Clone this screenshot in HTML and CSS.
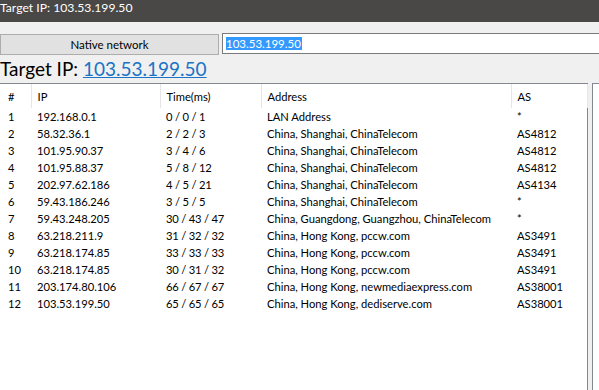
FILE: index.html
```html
<!DOCTYPE html>
<html lang="en">
<head>
  <meta charset="UTF-8" />
  <title>Target IP: 103.53.199.50</title>
  <link rel="stylesheet" href="styles.css">
</head>
<body>

  <!-- Window title -->
  <div class="titlebar">Target IP: 103.53.199.50</div>

  <!-- Toolbar -->
  <div class="toolbar">
    <button class="net-button">Native network</button>
    <div class="ip-input"><span class="selected">103.53.199.50</span></div>
  </div>

  <h1 class="target">Target IP: <a href="#">103.53.199.50</a></h1>

  <!-- Trace results -->
  <div class="panels">
    <div class="list-panel">
      <table class="trace">
        <colgroup>
          <col class="w-no"><col class="w-ip"><col class="w-time"><col class="w-addr"><col class="w-as">
        </colgroup>
        <thead>
          <tr>
            <th>#</th>
            <th>IP</th>
            <th>Time(ms)</th>
            <th>Address</th>
            <th>AS</th>
          </tr>
        </thead>
        <tbody id="traceRows"></tbody>
      </table>
    </div>
    <div class="side-panel"></div>
  </div>

  <script>
    const hops = [
      ['192.168.0.1', '0 / 0 / 1', 'LAN Address', '*'],
      ['58.32.36.1', '2 / 2 / 3', 'China, Shanghai, ChinaTelecom', 'AS4812'],
      ['101.95.90.37', '3 / 4 / 6', 'China, Shanghai, ChinaTelecom', 'AS4812'],
      ['101.95.88.37', '5 / 8 / 12', 'China, Shanghai, ChinaTelecom', 'AS4812'],
      ['202.97.62.186', '4 / 5 / 21', 'China, Shanghai, ChinaTelecom', 'AS4134'],
      ['59.43.186.246', '3 / 5 / 5', 'China, Shanghai, ChinaTelecom', '*'],
      ['59.43.248.205', '30 / 43 / 47', 'China, Guangdong, Guangzhou, ChinaTelecom', '*'],
      ['63.218.211.9', '31 / 32 / 32', 'China, Hong Kong, pccw.com', 'AS3491'],
      ['63.218.174.85', '33 / 33 / 33', 'China, Hong Kong, pccw.com', 'AS3491'],
      ['63.218.174.85', '30 / 31 / 32', 'China, Hong Kong, pccw.com', 'AS3491'],
      ['203.174.80.106', '66 / 67 / 67', 'China, Hong Kong, newmediaexpress.com', 'AS38001'],
      ['103.53.199.50', '65 / 65 / 65', 'China, Hong Kong, dediserve.com', 'AS38001']
    ];

    const tbody = document.getElementById('traceRows');
    tbody.innerHTML = hops.map((h, i) => `
      <tr>
        <td>${i + 1}</td>
        <td>${h[0]}</td>
        <td class="time">${h[1]}</td>
        <td>${h[2]}</td>
        <td>${h[3]}</td>
      </tr>
    `).join('');
  </script>
</body>
</html>
```

FILE: styles.css
```css
:root {
  --window-bg: #f0f0f0;
  --title-bg: #4a4846;
  --border: #828790;
  --link: #1a73c6;
  --select: #3399ff;
}

* {
  box-sizing: border-box;
}

body, html {
  margin: 0;
  padding: 0;
  height: 100%;
  overflow: hidden;
}

body {
  background-color: var(--window-bg);
  font-family: Lato, 'Liberation Sans', sans-serif;
  font-size: 11.2px;
  color: #000;
}

.titlebar {
  height: 22px;
  background-color: var(--title-bg);
  color: #fff;
  font-size: 12.2px;
  line-height: 15px;
}

.toolbar {
  display: flex;
  align-items: flex-start;
  margin-top: 11px;
}

.net-button {
  width: 219px;
  height: 21px;
  margin-top: 1px;
  background-color: #e1e1e1;
  border: 1px solid #adadad;
  font-family: inherit;
  font-size: 11.5px;
  padding: 0;
}

.ip-input {
  flex: 1;
  height: 21px;
  margin-left: 3px;
  background-color: #fff;
  border: 1px solid #7a7a7a;
  border-right: none;
  padding: 2px 0 0 3px;
  font-size: 11.5px;
  line-height: 15px;
}

.selected {
  background-color: var(--select);
  color: #fff;
  padding-right: 1px;
}

.target {
  margin: 0;
  height: 28px;
  font-size: 19px;
  font-weight: normal;
  line-height: 28px;
}

.target a {
  color: var(--link);
}

.panels {
  display: flex;
  height: 320px;
}

.list-panel {
  width: 588px;
  background-color: #fff;
  border: 1px solid var(--border);
  border-left: none;
}

.side-panel {
  flex: 1;
  margin-left: 4px;
  background-color: #fff;
  border: 1px solid var(--border);
  border-right: none;
}

.trace {
  width: 587px;
  border-collapse: collapse;
  table-layout: fixed;
}

.w-no { width: 31px; }
.w-ip { width: 129px; }
.w-time { width: 101px; }
.w-addr { width: 250px; }
.w-as { width: 76px; }

.trace th,
.trace td {
  padding: 0 0 0 6px;
  text-align: left;
  white-space: nowrap;
}

.trace th {
  height: 24px;
  font-weight: normal;
  border-right: 1px solid #e5e5e5;
}

.trace td {
  height: 17px;
}

.trace th:first-child,
.trace td:first-child {
  padding-left: 8px;
}

.trace td.time {
  letter-spacing: -0.2px;
}
```
